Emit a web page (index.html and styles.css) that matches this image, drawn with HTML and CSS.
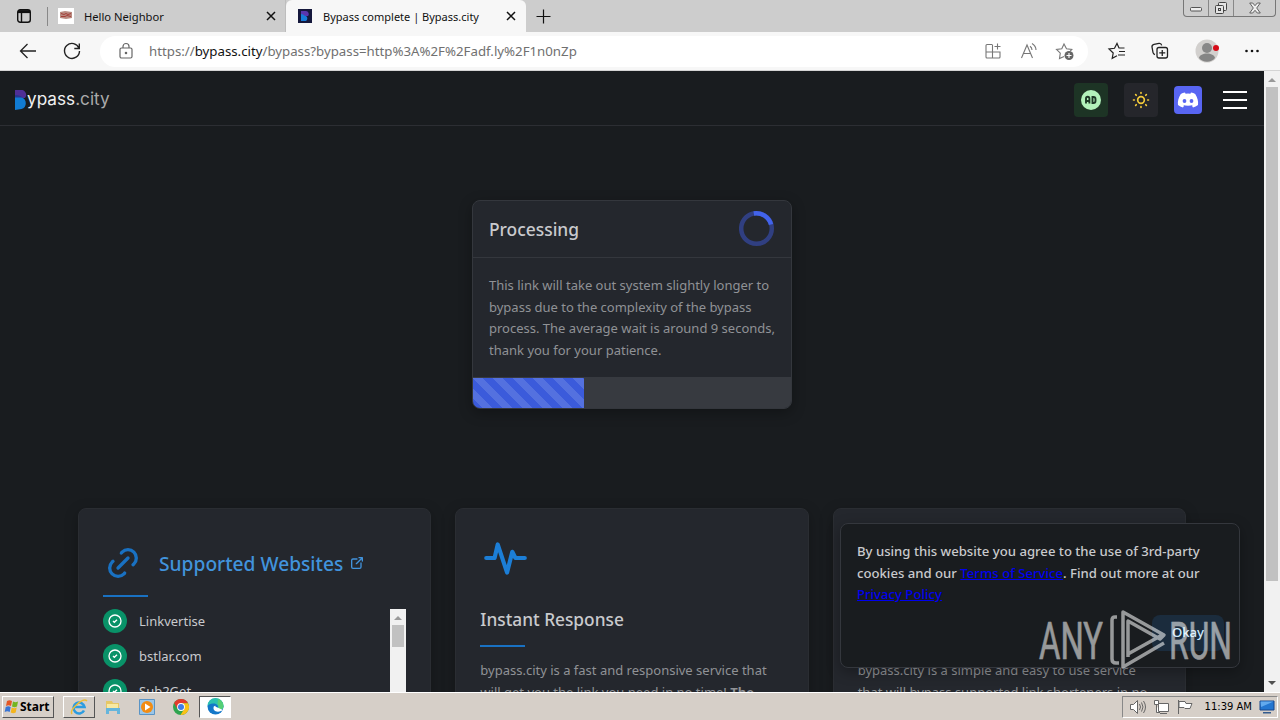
FILE: index.html
```html
<!DOCTYPE html>
<html lang="en">
<head>
    <meta charset="UTF-8">
    <meta name="viewport" content="width=device-width, initial-scale=1.0">
    <title>Bypass complete | Bypass.city</title>
    <link rel="stylesheet" href="styles.css">
</head>
<body>
    <div class="screen">
        <!-- Tab strip -->
        <div class="tabs">
            <svg class="tab-menu" width="16" height="16" viewBox="0 0 16 16" fill="none" stroke="#111" stroke-width="1.4"><rect x="1.7" y="1.7" width="12.6" height="12.6" rx="2.5"/><path d="M2 3.6h12" stroke-width="3"/><path d="M5.5 4v10"/></svg>
            <div class="tab tab-back">
                <svg width="16" height="16" viewBox="0 0 16 16"><path fill="#fff" d="M0 0h16v16H0z"/><path fill="#b98a80" d="M2 4l5-1 7 1v6l-6 1-6-1z"/><path d="M3 5.500l3 1 2-1 2 1 3-1M3 8.500h4l2-1 4 1" stroke="#a43e38" fill="none"/></svg>
                <span class="tab-title">Hello Neighbor</span>
                <svg class="close" width="10" height="10" viewBox="0 0 10 10" stroke="#111" stroke-width="1.5"><path d="M1 1l8 8M9 1L1 9"/></svg>
            </div>
            <div class="tab tab-active">
                <svg width="14" height="14" viewBox="0 0 14 14"><path fill="#15183c" d="M0 0h14v14H0z"/><path fill="#5a35ae" d="M3 2h5a3 3 0 0 1 2 5H3z"/><path fill="#177bd8" d="M3 5c2 0 3 1 4 2h1a3 3 0 0 1 0 5H3z"/></svg>
                <span class="tab-title">Bypass complete | Bypass.city</span>
                <svg class="close" width="10" height="10" viewBox="0 0 10 10" stroke="#111" stroke-width="1.5"><path d="M1 1l8 8M9 1L1 9"/></svg>
            </div>
            <svg class="new-tab" width="15" height="15" viewBox="0 0 15 15" stroke="#111" stroke-width="1.2"><path d="M7.500 0.500v14M0.500 7.500h14"/></svg>
            <div class="window-buttons">
                <span><svg width="12" height="12" viewBox="0 0 12 12" fill="#eee" stroke="#555"><rect x=".5" y="5.500" width="11" height="3.500" rx="1"/></svg></span>
                <span><svg width="14" height="14" viewBox="0 0 14 14" fill="#e4e4e4" stroke="#444"><rect x="4.500" y="1.500" width="8" height="8" rx="1"/><rect x="1.500" y="4.500" width="8" height="8" rx="1"/><rect x="4.500" y="7.500" width="2" height="2"/></svg></span>
                <span class="wide"><svg width="12" height="12" viewBox="0 0 12 12" fill="#eee" stroke="#555" stroke-width=".9"><path d="M.7 1h3L6 3.700 8.300 1h3L7.700 6l3.600 5h-3L6 8.300 3.700 11h-3L4.300 6z"/></svg></span>
            </div>
        </div>

        <!-- Address bar -->
        <div class="toolbar">
            <svg width="20" height="20" viewBox="0 0 20 20" fill="none" stroke="#222" stroke-width="1.300"><path d="M18 10H2.500M9.500 3l-7 7 7 7"/></svg>
            <svg class="reload" width="20" height="20" viewBox="0 0 20 20" fill="none" stroke="#222" stroke-width="1.400"><path d="M17 7.200A7.500 7.500 0 1 0 17.500 10M17.300 2.500v5h-5"/></svg>
            <div class="address">
                <svg width="16" height="18" viewBox="0 0 16 18" fill="none" stroke="#666" stroke-width="1.200"><rect x="2" y="6" width="12" height="10" rx="1.500"/><path d="M5 6V4.500a3 3 0 0 1 6 0V6"/><circle cx="8" cy="11" r=".7" fill="#555"/></svg>
                <span class="url">https://<b>bypass.city</b>/bypass?bypass=http%3A%2F%2Fadf.ly%2F1n0nZp</span>
                <div class="address-icons">
                    <svg width="20" height="20" viewBox="0 0 20 20" fill="none" stroke="#777" stroke-width="1.100"><path d="M9 3.500H4a1 1 0 0 0-1 1V16a1 1 0 0 0 1 1h12a1 1 0 0 0 1-1v-5H3M9.500 3.500V17M14.500 2.500v6M11.500 5.500h6"/></svg>
                    <svg width="20" height="20" viewBox="0 0 20 20" fill="none" stroke="#777" stroke-width="1.100"><path d="M2.500 17L8 4l5.500 13M4.500 12.500h7M11 5.200c1.500 1 2 2.300 2 3.800M13 2.500c2.500 1.500 4 3.500 4 6.500"/></svg>
                    <svg width="20" height="20" viewBox="0 0 20 20" fill="none" stroke="#777" stroke-width="1.100"><path d="M9 15.500l-4.500 2 .8-5.300L1.500 8.500l5.300-.8L9 3l2.500 4.700 5.300.8-1.500 1.500"/><circle cx="14" cy="14.500" r="4.500" fill="#666" stroke="none"/><path d="M14 12v5M11.500 14.500h5" stroke="#fff"/></svg>
                </div>
            </div>
            <div class="toolbar-icons">
                <svg width="20" height="20" viewBox="0 0 20 20" fill="none" stroke="#222" stroke-width="1.200"><path d="M10 14.700l-4.800 2.600 1-5.300L2 8l5.500-.7L10 2.500l2 4.500h5.500M12 10.500h6M11 14h7"/></svg>
                <svg width="20" height="20" viewBox="0 0 20 20" fill="none" stroke="#222" stroke-width="1.300"><path d="M5 13.500a2.500 2.500 0 0 1-2-2L2 6a2.500 2.500 0 0 1 2-2.700l5-.9a2.500 2.500 0 0 1 2.700 2"/><rect x="7" y="6.500" width="10.500" height="10.500" rx="2"/><path d="M12.250 9v6M9.250 11.800h6"/></svg>
                <svg class="profile" width="24" height="24" viewBox="0 0 24 24"><circle cx="12" cy="12" r="11.500" fill="#d2d0ce"/><circle cx="12" cy="9" r="5" fill="#888"/><path d="M4 19c1-6 15-6 16 0-4 5-12 5-16 0z" fill="#858585"/><circle cx="21" cy="9" r="3" fill="#d60c18"/></svg>
                <svg width="20" height="20" viewBox="0 0 20 20" fill="#111"><circle cx="4.500" cy="10" r="1.300"/><circle cx="10" cy="10" r="1.300"/><circle cx="15.500" cy="10" r="1.300"/></svg>
            </div>
        </div>

        <div class="viewport">
            <div class="page">
                <header class="site-header">
                    <div class="logo">
                        <svg width="12" height="20" viewBox="0 0 12 20"><path d="M0 0h5a5 5 0 0 1 5 8H0z" fill="#4f2f96"/><path d="M0 5c4 0 7 1 8 4H0z" fill="#28358d"/><path d="M0 7.500h6.500a6 6 0 0 1 0 11.500L0 20z" fill="#117bd3"/></svg>
                        <span class="logo-text">ypass<i>.city</i></span>
                    </div>
                    <nav class="actions">
                        <a class="action action-ad"><svg width="20" height="20" viewBox="0 0 20 20"><circle cx="10" cy="10" r="10" fill="#b2f2bb"/><path d="M5 13.500V8.500a1.700 1.700 0 0 1 3.400 0v5M5 11h3.400M11.500 7v6h1a2 2 0 0 0 2-2V9a2 2 0 0 0-2-2z" fill="none" stroke="#1d3827" stroke-width="1.900"/></svg></a>
                        <a class="action action-theme"><svg width="20" height="20" viewBox="0 0 24 24" fill="none" stroke="#f5cc3a" stroke-width="2" stroke-linecap="round"><circle cx="12" cy="12" r="4"/><path d="M3 12h1M12 3v1M20 12h1M12 20v1M5.600 5.600l.7.7M18.400 5.600l-.7.7M17.700 17.700l.7.7M6.300 17.700l-.7.7"/></svg></a>
                        <a class="action action-discord"><svg width="22" height="18" viewBox="0 0 22 18"><path fill="#fff" d="M8 1.500l.6 1.200a16 16 0 0 1 4.800 0L14 1.500c1.600.3 3 .8 4.200 1.400C20.500 6.500 21.500 10 21 14c-1.500 1.300-3.200 2-5 2.500l-1.200-2c.6-.2 1.100-.4 1.600-.8-3.300 1.500-7.500 1.500-10.800 0 .5.400 1 .6 1.600.8l-1.200 2C4.200 16 2.500 15.300 1 14c-.5-4 .5-7.500 2.800-11.100C5 2.300 6.400 1.800 8 1.500z"/><ellipse cx="7.500" cy="10" rx="1.900" ry="2.100" fill="#5865f2"/><ellipse cx="14.500" cy="10" rx="1.900" ry="2.100" fill="#5865f2"/></svg></a>
                        <a class="burger"><span></span><span></span><span></span></a>
                    </nav>
                </header>

                <main>
                    <section class="process">
                        <div class="process-head">
                            <h2>Processing</h2>
                            <svg width="36" height="36" viewBox="0 0 36 36" fill="none" stroke-width="4.500"><circle cx="17.500" cy="17.500" r="15.300" stroke="#303f81"/><path d="M14.800 2.500A15.300 15.300 0 0 1 32 13.500" stroke="#4263eb"/></svg>
                        </div>
                        <p class="process-text">This link will take out system slightly longer to<br>bypass due to the complexity of the bypass<br>process. The average wait is around 9 seconds,<br>thank you for your patience.</p>
                        <div class="progress"><div class="progress-bar" style="width: 35%"></div></div>
                    </section>

                    <section class="features">
                        <article class="card">
                            <div class="supported">
                                <svg width="40" height="40" viewBox="0 0 24 24" fill="none" stroke="#1971c2" stroke-width="2" stroke-linecap="round" stroke-linejoin="round"><path d="M9 15l6-6M11 6l.463-.536a5 5 0 0 1 7.071 7.072L18 13M13 18l-.397.534a5.068 5.068 0 0 1-7.127 0 4.972 4.972 0 0 1 0-7.071L6 11"/></svg>
                                <h2>Supported Websites</h2>
                                <svg class="external" width="16" height="16" viewBox="0 0 24 24" fill="none" stroke="#4193dc" stroke-width="2" stroke-linecap="round" stroke-linejoin="round"><path d="M12 6H6a2 2 0 0 0-2 2v10a2 2 0 0 0 2 2h10a2 2 0 0 0 2-2v-6M11 13l9-9M15 4h5v5"/></svg>
                            </div>
                            <div class="rule"></div>
                            <div class="sites">
                                <ul>
                                    <li><span class="check"><svg width="16" height="16" viewBox="0 0 24 24" fill="none" stroke="#fff" stroke-width="2"><circle cx="12" cy="12" r="9"/><path d="M9 12l2 2 4-4"/></svg></span>Linkvertise</li>
                                    <li><span class="check"><svg width="16" height="16" viewBox="0 0 24 24" fill="none" stroke="#fff" stroke-width="2"><circle cx="12" cy="12" r="9"/><path d="M9 12l2 2 4-4"/></svg></span>bstlar.com</li>
                                    <li><span class="check"><svg width="16" height="16" viewBox="0 0 24 24" fill="none" stroke="#fff" stroke-width="2"><circle cx="12" cy="12" r="9"/><path d="M9 12l2 2 4-4"/></svg></span>Sub2Get</li>
                                </ul>
                                <div class="scrollbar">
                                    <span class="arrow-up"></span>
                                    <span class="thumb thumb-small"></span>
                                </div>
                            </div>
                        </article>
                        <article class="card">
                            <div class="card-head">
                                <svg width="50" height="50" viewBox="0 0 24 24" fill="none" stroke="#1c7ed6" stroke-width="2" stroke-linecap="round" stroke-linejoin="round"><path d="M3 12h4l1.500-6.500L13 19l2.500-10L17 12h4.500"/></svg>
                                <h3>Instant Response</h3>
                            </div>
                            <div class="rule"></div>
                            <p>bypass.city is a fast and responsive service that<br>will get you the link you need in no time! <b>The</b></p>
                        </article>
                        <article class="card">
                            <div class="card-head"></div>
                            <div class="rule"></div>
                            <p>bypass.city is a simple and easy to use service<br>that will bypass supported link shorteners in no</p>
                        </article>
                    </section>
                </main>

                <div class="cookies">
                    <p>By using this website you agree to the use of 3rd-party<br>cookies and our <a href="#">Terms of Service</a>. Find out more at our<br><a href="#">Privacy Policy</a></p>
                    <button>Okay</button>
                </div>

                <svg class="watermark" width="196" height="66" viewBox="0 0 196 66" fill="none" stroke="#fff" stroke-width="3.500" stroke-linejoin="round">
                    <text class="watermark-text" x="3" y="52" textLength="64" lengthAdjust="spacingAndGlyphs">ANY</text>
                    <text class="watermark-text" x="133" y="52" textLength="63" lengthAdjust="spacingAndGlyphs">RUN</text>
                    <path d="M81 10h-2q-3 0-3 3v39q0 4 4 4h3M87 53V5l41 23-4 4-32-18v36M92 47l34-19M87 53v7l41-24"/>
                </svg>
            </div>
            <div class="scrollbar page-scroll">
                <span class="arrow-up"></span>
                <span class="thumb"></span>
                <span class="arrow-down"></span>
            </div>
        </div>

        <div class="taskbar">
            <div class="start">
                <svg width="16" height="16" viewBox="0 0 16 16"><path d="M3 2c2-1 3-1 5 0L7 7C5 6 4 6 2 7z" fill="#e45724"/><path d="M9 2.500c2 1 3 1 5 0l-1 5c-2 1-3 1-5 0z" fill="#73b51f"/><path d="M1.700 8c2-1 3-1 5 0l-1 5c-2-1-3-1-5 0z" fill="#3975d4"/><path d="M7.700 8.500c2 1 3 1 5 0l-1 5c-2 1-3 1-5 0z" fill="#f4b51e"/></svg>
                <b>Start</b>
            </div>
            <div class="task task-ie"><svg width="18" height="18" viewBox="0 0 18 18" fill="none"><path d="M14 12.500A5.500 5.500 0 1 1 14.500 9H4" stroke="#2c9ce0" stroke-width="2.600"/><path d="M2 16C-1 12 13-1 17 3" stroke="#edbd36" stroke-width="1.500"/></svg></div>
            <div class="task"><svg width="16" height="16" viewBox="0 0 16 16"><path fill="#e6c766" d="M1 2h6l1 2h6v8H1z"/><path fill="#f8e9a2" d="M2 5h11v6H2z"/><path fill="#65b5dc" d="M1 9h14v6h-3v-3H4v3H1z"/></svg></div>
            <div class="task"><svg width="16" height="16" viewBox="0 0 16 16"><path fill="#9bc6e8" stroke="#5a94c5" d="M.5.5h15v15H.5z"/><circle cx="8" cy="8" r="6" fill="#f28c13"/><path d="M6 4.500v7L11.500 8z" fill="#fff"/></svg></div>
            <div class="task"><svg width="16" height="16" viewBox="0 0 16 16"><circle cx="8" cy="8" r="8" fill="#2fa44f"/><path d="M1.100 4A8 8 0 0 1 15 4.200H8L4.500 10z" fill="#e33b2e"/><path d="M15 4.200A8 8 0 0 1 7.500 16l4-6.500L10 4.200z" fill="#fbc116"/><circle cx="8" cy="8" r="3.900" fill="#fff"/><circle cx="8" cy="8" r="3" fill="#3f7de8"/></svg></div>
            <div class="task task-edge"><svg width="17" height="17" viewBox="0 0 17 17"><circle cx="8.500" cy="8.500" r="8" fill="#1377c8"/><path d="M.5 8a8 8 0 0 1 16 0c0 4-4 4.500-6 3 2-3-1-6-5-5.500-2 0-4 1-5 2.500z" fill="#2dc1b0"/><path d="M11 1a8 8 0 0 1 5.500 7c0 4-4 4.500-6 3 2-2 1-4 0-5z" fill="#55cf76"/><path d="M7 8c-2 4 2 7 7 5 1 0 2-1 2-1M8 7.500c-1 3 0 4 3 5" fill="#fff"/></svg></div>
            <div class="tray">
                <svg width="17" height="16" viewBox="0 0 17 16" fill="#fff" stroke="#666"><path d="M1.500 5.500h3l4-4v13l-4-4h-3z"/><path d="M10.500 5q2 3 0 6M12.500 3.500q3 4.500 0 9M14.500 2q4 6 0 12" fill="none"/></svg>
                <svg width="17" height="16" viewBox="0 0 17 16" fill="#fff" stroke="#666"><path d="M5.500 4.500h10v8h-10zM7 14.500h7M1.500 1.500h4v4h-4zM3.500 6v7.500H7" /></svg>
                <svg width="17" height="16" viewBox="0 0 17 16" fill="#fff" stroke="#666"><path d="M1.500 1v14M2 2.500h6l1 2h6l-2 5H8l-1-1H2z"/></svg>
                <span class="clock">11:39 AM</span>
                <svg width="16" height="14" viewBox="0 0 16 14"><path d="M1 1h14v9H1z" fill="#2476d0" stroke="#17478c"/><path d="M1.500 1.500h13L2 7z" fill="#62a9ed"/><path d="M4 12h8v1.500H4z" fill="#335b8e"/></svg>
            </div>
        </div>
    </div>
</body>
</html>
```
FILE: styles.css
```css
:root {
    --page: #191c1f;
    --card: #24272d;
    --line: #34373d;
    --text: #c9cacd;
    --dimmed: #909296;
    --blue: #1971c2;
}

* {
    box-sizing: border-box;
    margin: 0;
    padding: 0;
}

body {
    font-family: "Noto Sans", "Open Sans", sans-serif;
    font-size: 13px;
    overflow: hidden;
}

svg {
    display: block;
    flex-shrink: 0;
}

.screen {
    width: 1280px;
    height: 720px;
    display: flex;
    flex-direction: column;
    overflow: hidden;
}

/* browser */
.tabs {
    height: 32px;
    background: #cdcdcd;
    display: flex;
    align-items: center;
    flex-shrink: 0;
}

.tab-menu {
    margin: 0 15px 0 16px;
}

.tab {
    height: 32px;
    display: flex;
    align-items: center;
}

.tab-back {
    width: 239px;
    padding: 0 9px 0 11px;
    position: relative;
    border-right: 1px solid #bdbdbd;
}

.tab-back::before {
    content: "";
    position: absolute;
    left: 0;
    top: 7px;
    width: 1px;
    height: 19px;
    background: #888;
}

.tab-active {
    width: 240px;
    padding: 0 10px 0 12px;
    background: #f7f7f7;
    border-radius: 6px 6px 0 0;
}

.tab-title {
    font-size: 11.2px;
    color: #111;
    margin-left: 10px;
    white-space: nowrap;
}

.tab-active .tab-title {
    margin-left: 11px;
    font-size: 11px;
}

.close {
    margin-left: auto;
}

.new-tab {
    margin-left: 10px;
}

.window-buttons {
    display: flex;
    align-self: flex-start;
    height: 17px;
    margin: 0 4px 0 auto;
    border: 1px solid #777;
    border-top: 0;
    border-radius: 0 0 4px 4px;
}

.window-buttons span {
    width: 25px;
    display: flex;
    align-items: center;
    justify-content: center;
    border-right: 1px solid #888;
}

.window-buttons .wide {
    width: 41px;
    border-right: 0;
}

.toolbar {
    height: 39px;
    background: #f7f7f7;
    border-bottom: 1px solid #d4d4d4;
    display: flex;
    align-items: center;
    padding: 0 18px;
    flex-shrink: 0;
}

.reload {
    margin-left: 24px;
}

.address {
    width: 988px;
    height: 31px;
    margin-left: 18px;
    padding: 0 13px 0 18px;
    background: #fff;
    border-radius: 16px;
    display: flex;
    align-items: center;
}

.url {
    margin-left: 15px;
    font-size: 13.25px;
    color: #707070;
    white-space: nowrap;
}

.url b {
    font-weight: normal;
    color: #111;
}

.address-icons {
    display: flex;
    gap: 16px;
    margin-left: auto;
}

.toolbar-icons {
    display: flex;
    align-items: center;
    gap: 23px;
    margin-left: 19px;
}

.profile {
    margin-left: 2px;
}

.viewport {
    height: 621px;
    display: flex;
}

.page {
    position: relative;
    width: 1264px;
    height: 621px;
    overflow: hidden;
    background: var(--page);
    color: var(--text);
}

/* site */
.site-header {
    height: 55px;
    padding: 0 17px 0 15px;
    border-bottom: 1px solid #2c2e33;
    display: flex;
    align-items: center;
    justify-content: space-between;
}

.logo {
    display: flex;
    align-items: center;
    padding-top: 4px;
}

.logo-text {
    margin-bottom: 3px;
    font-family: Inter, sans-serif;
    font-size: 17.2px;
    line-height: 24px;
    color: #f1f1f1;
}

.logo-text i {
    font-style: normal;
    color: #aaa;
}

.actions {
    display: flex;
    align-items: center;
    gap: 16px;
    padding-top: 4px;
}

.action {
    width: 34px;
    height: 34px;
    border-radius: 4px;
    display: flex;
    align-items: center;
    justify-content: center;
}

.action-ad {
    background: #1d3425;
}

.action-theme {
    background: #25262b;
}

.action-discord {
    width: 28px;
    height: 28px;
    background: #5865f2;
}

.burger {
    width: 24px;
    margin-left: 5px;
    display: flex;
    flex-direction: column;
    gap: 6px;
}

.burger span {
    height: 2px;
    background: #fff;
}

h2, h3 {
    font-weight: 500;
    font-size: 17.4px;
    white-space: nowrap;
}

.process {
    width: 320px;
    height: 209px;
    margin: 74px auto 0;
    background: var(--card);
    border: 1px solid var(--line);
    border-radius: 8px;
    overflow: hidden;
    box-shadow: 0 4px 14px rgba(0, 0, 0, 0.3);
}

.process-head {
    height: 57px;
    padding: 0 16px;
    display: flex;
    align-items: center;
    justify-content: space-between;
    border-bottom: 1px solid var(--line);
}

.process-text {
    padding: 17px 16px 15px;
    line-height: 21.7px;
    color: var(--dimmed);
    white-space: nowrap;
}

.progress {
    height: 32px;
    padding-top: 1px;
    background: #373a40;
}

.progress-bar {
    height: 30px;
    background: linear-gradient(45deg, #5471df 25%, #3b5bdb 25% 50%, #5471df 50% 75%, #3b5bdb 75%) 0 0 / 20px 20px;
}

.features {
    width: 1108px;
    margin: 99px auto 0;
    display: grid;
    grid-template-columns: repeat(3, minmax(0, 1fr));
    gap: 24px;
}

.card {
    height: 300px;
    padding: 24px;
    background: var(--card);
    border: 1px solid #2a2d32;
    border-radius: 8px;
    box-shadow: 0 4px 14px rgba(0, 0, 0, 0.25);
}

.supported {
    height: 62px;
    padding-bottom: 2px;
    display: flex;
    align-items: center;
    color: #4193dc;
}

.supported h2 {
    margin-left: 16px;
    font-size: 19.2px;
}

.external {
    margin-left: 6px;
}

.rule {
    width: 45px;
    height: 2px;
    background: var(--blue);
}

.sites {
    height: 190px;
    margin-top: 12px;
    display: flex;
    justify-content: space-between;
}

.sites ul {
    list-style: none;
    display: flex;
    flex-direction: column;
    gap: 11px;
}

.sites li {
    display: flex;
    align-items: center;
    gap: 12px;
    height: 24px;
}

.check {
    width: 24px;
    height: 24px;
    border-radius: 50%;
    background: #099268;
    display: grid;
    place-items: center;
}

.card-head {
    height: 112px;
}

.card-head h3 {
    margin-top: 25px;
    font-size: 17.3px;
}

.card p {
    margin-top: 13px;
    line-height: 21.7px;
    color: var(--dimmed);
    white-space: nowrap;
}

.cookies {
    position: absolute;
    left: 840px;
    top: 452px;
    width: 400px;
    height: 145px;
    padding: 17px 16px 15px;
    background: var(--page);
    border: 1px solid var(--line);
    border-radius: 8px;
    box-shadow: 0 4px 14px rgba(0, 0, 0, 0.3);
    font-size: 13.15px;
    font-weight: 500;
    line-height: 21.7px;
    white-space: nowrap;
}

.cookies a {
    color: #0000ee;
}

.cookies button {
    display: block;
    width: 72px;
    height: 36px;
    margin: 9px -1px 0 auto;
    border: 0;
    border-radius: 8px;
    background: #1b2c3d;
    color: #d0ebff;
    font: inherit;
}

.watermark {
    position: absolute;
    left: 1036px;
    top: 536px;
    opacity: 0.55;
}

.watermark-text {
    font: 52px Roboto, sans-serif;
    fill: #fff;
    stroke: #fff;
    stroke-width: 0.6px;
}

.scrollbar {
    width: 16px;
    background: #f1f1f1;
    display: flex;
    flex-direction: column;
    align-items: center;
}

.arrow-up, .arrow-down {
    border: 4px solid transparent;
    border-top-width: 0;
    border-bottom-color: #999;
    margin: 7px 0 5px;
}

.arrow-down {
    border-top: 4px solid #505050;
    border-bottom: 0;
    margin: auto 0 7px;
}

.thumb {
    width: 12px;
    height: 494px;
    background: #c1c1c1;
}

.thumb-small {
    height: 22px;
}

/* taskbar */
.taskbar {
    height: 28px;
    flex-shrink: 0;
    background: #d6cfc8;
    border-top: 1px solid #fff;
    display: flex;
    align-items: center;
    padding-left: 2px;
}

.start {
    width: 52px;
    height: 22px;
    padding-left: 1px;
    border: 1px solid;
    border-color: #fff #555 #555 #fff;
    display: flex;
    align-items: center;
    font-size: 12px;
    margin-right: 9px;
}

.task {
    width: 34px;
    height: 22px;
    display: flex;
    align-items: center;
    justify-content: center;
}

.task-ie {
    width: 32px;
    margin-right: 1px;
    border: 1px solid;
    border-color: #fff #555 #555 #fff;
}

.task-edge {
    width: 32px;
    margin-left: 1px;
    background: #fff;
    border: 1px solid;
    border-color: #555 #fff #fff #555;
}

.tray {
    width: 156px;
    height: 22px;
    margin-left: auto;
    margin-right: 2px;
    padding: 0 2px 0 6px;
    border: 1px solid;
    border-color: #888 #fff #fff #888;
    display: flex;
    align-items: center;
    gap: 7px;
}

.clock {
    margin-left: auto;
    font-family: "DejaVu Sans", sans-serif;
    font-size: 10px;
    white-space: nowrap;
    color: #000;
}
```
